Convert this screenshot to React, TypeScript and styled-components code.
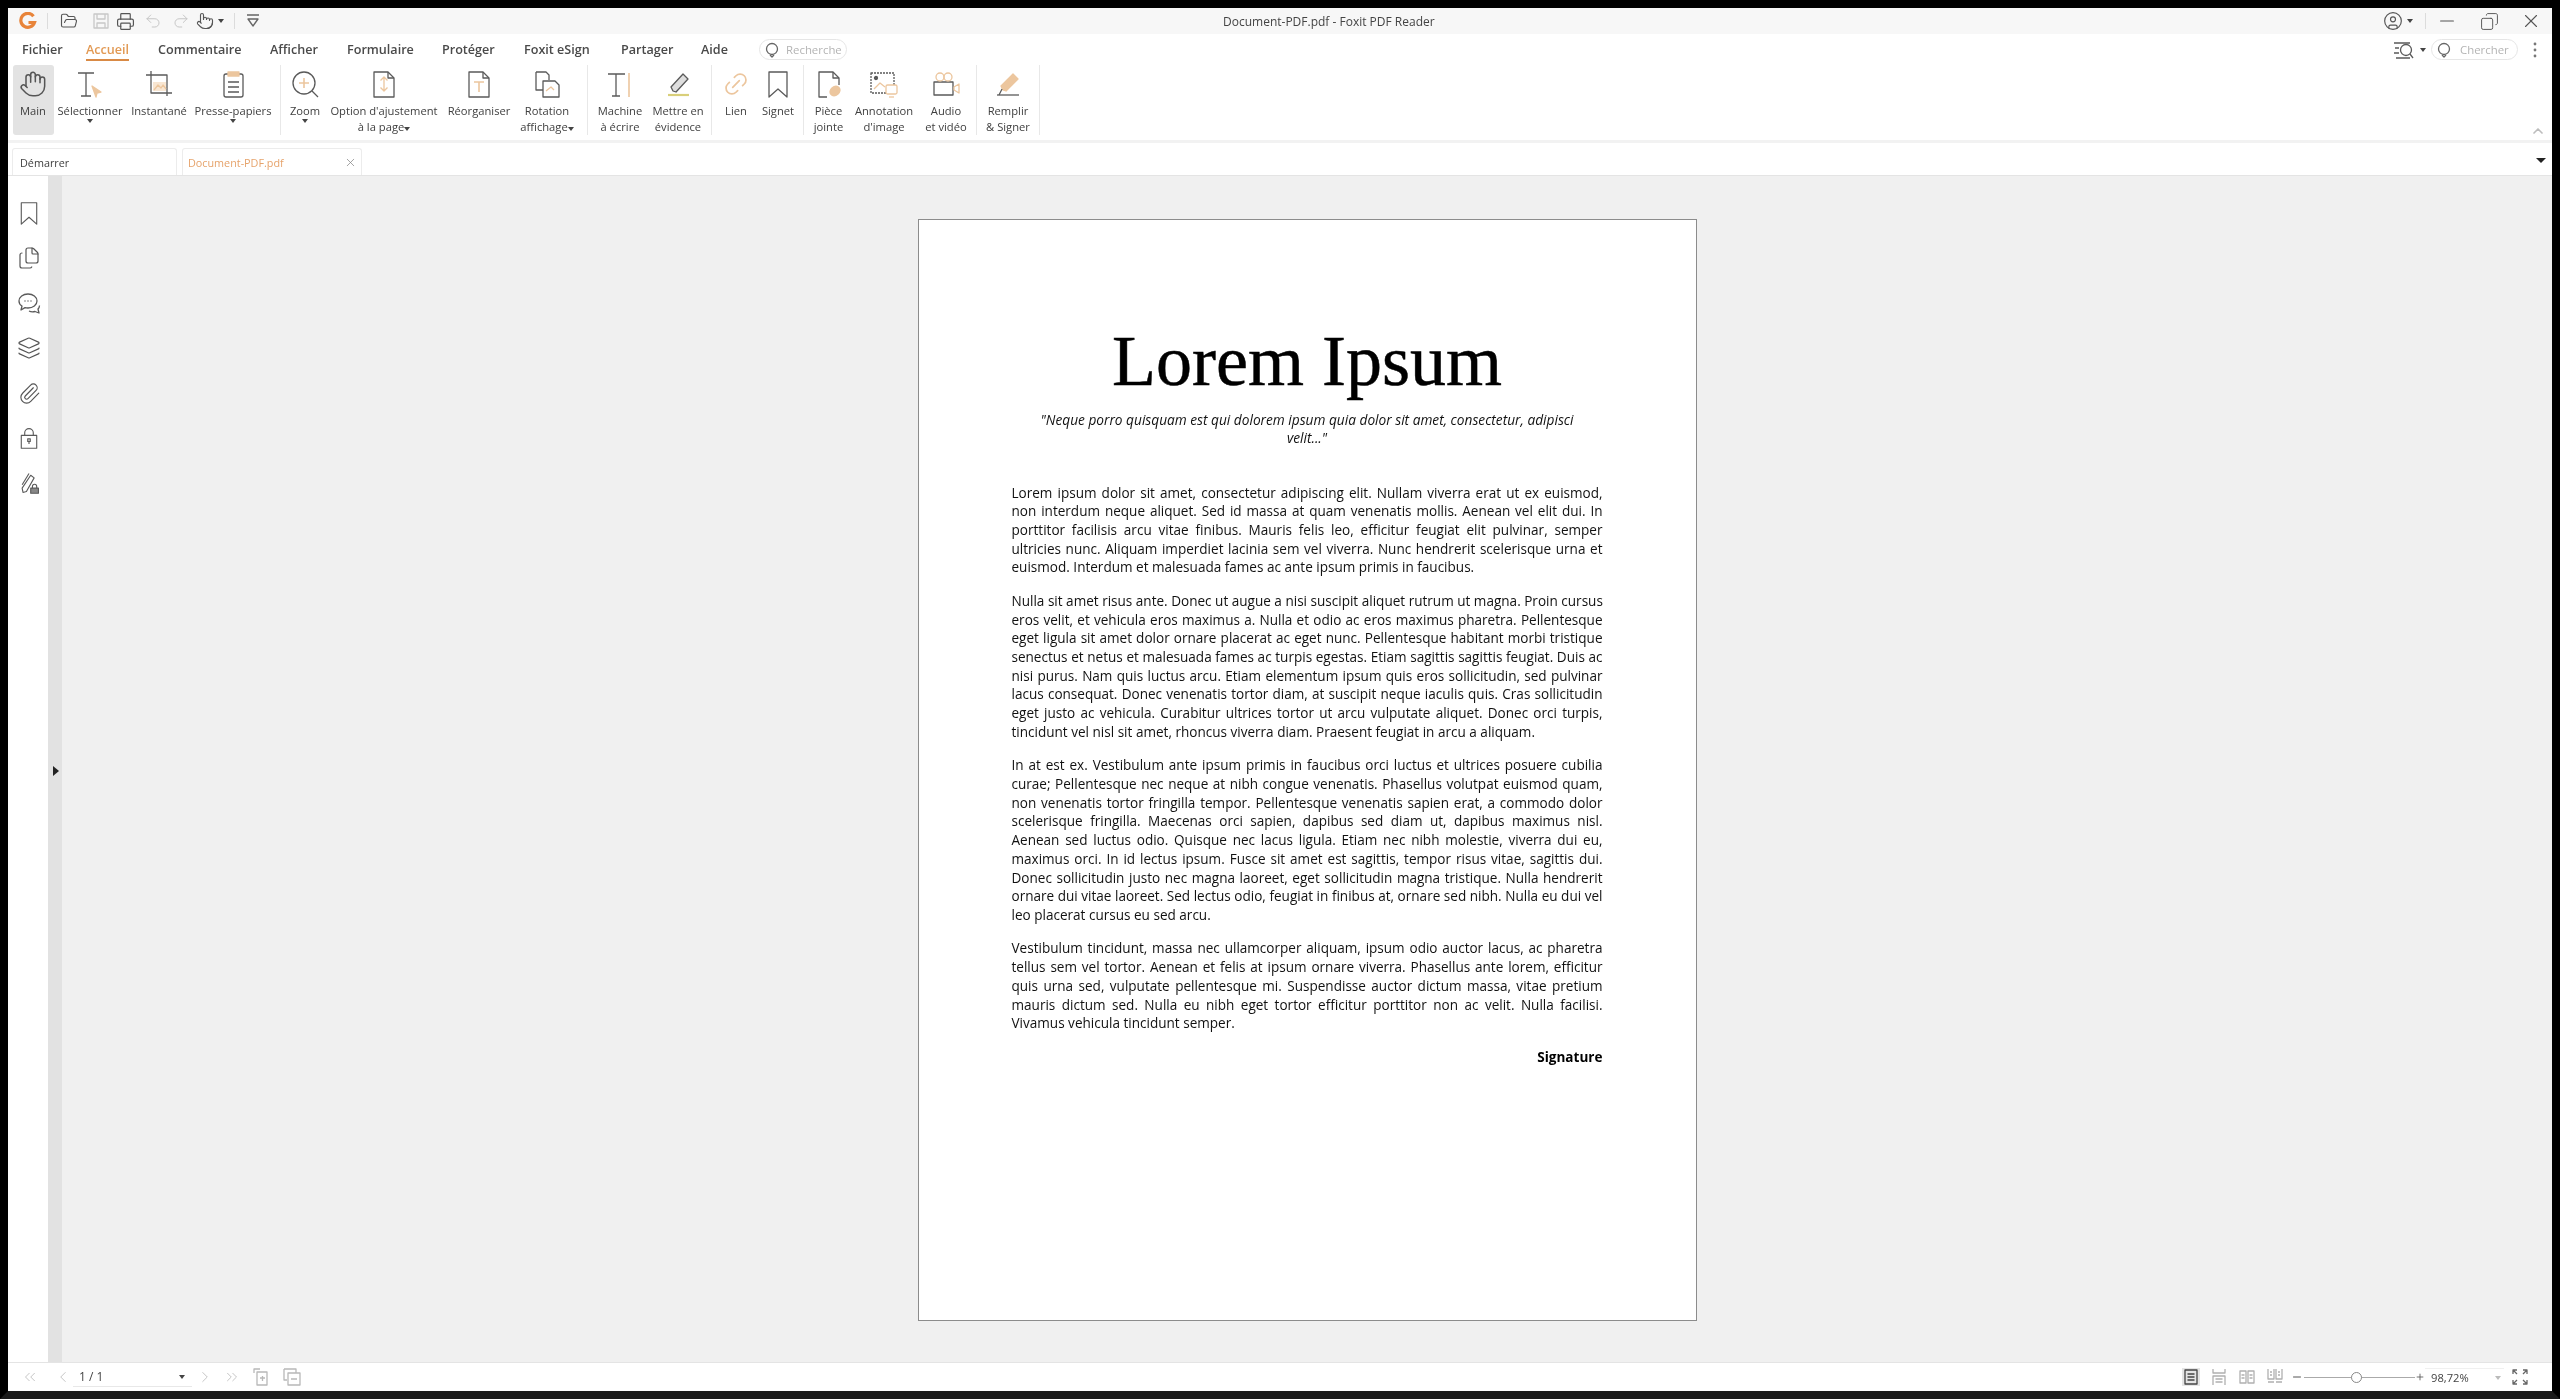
import React, { FC, ReactNode } from "react";
import styled, { createGlobalStyle } from "styled-components";
import {
  Hand,
  FolderOpen,
  Printer,
  Undo2,
  Redo2,
  Pointer,
  CircleUser,
  Copy,
  X,
  Minus,
  Plus,
  Layers,
  Paperclip,
  Files,
  Link2,
  ChevronUp,
  ChevronLeft,
  ChevronRight,
  ChevronsLeft,
  ChevronsRight,
} from "lucide-react";

const GlobalStyle = createGlobalStyle`
  html, body {
    margin: 0;
    padding: 0;
    background: #000;
  }
  * {
    box-sizing: border-box;
  }
`;

const Frame = styled.div`
  width: 2560px;
  height: 1399px;
  border: 8px solid #000;
  border-bottom-color: #1b1b1b;
  display: flex;
  flex-direction: column;
  background: #fff;
  font-family: "Open Sans", "Noto Sans", sans-serif;
  color: #4a4a4a;
  overflow: hidden;
  filter: blur(0.55px);
`;

const TitleBar = styled.div`
  height: 26px;
  flex: none;
  background: #f7f7f7;
  display: flex;
  align-items: center;
`;

const QuickBar = styled.div`
  width: 1215px;
  display: flex;
  align-items: center;
`;

const Slot = styled.span<{ $w: number; $dim?: boolean }>`
  width: ${(p) => p.$w}px;
  flex: none;
  display: flex;
  align-items: center;
  justify-content: center;
  color: ${(p) => (p.$dim ? "#c4c4c4" : "#555")};
`;

const VSep = styled.span`
  width: 1px;
  height: 16px;
  flex: none;
  background: #dcdcdc;
`;

const WindowTitle = styled.div`
  font-size: 12px;
  color: #444;
`;

const WindowButtons = styled.div`
  margin-left: auto;
  display: flex;
  align-items: center;
`;

const Caret = styled.span<{ $c?: string; $s?: number }>`
  display: inline-block;
  width: 0;
  height: 0;
  border-left: ${(p) => p.$s ?? 3.5}px solid transparent;
  border-right: ${(p) => p.$s ?? 3.5}px solid transparent;
  border-top: ${(p) => (p.$s ?? 3.5) + 0.5}px solid ${(p) => p.$c ?? "#444"};
`;

const MenuBar = styled.div`
  height: 28px;
  flex: none;
  display: flex;
  align-items: center;
  padding-left: 14px;
  padding-top: 3px;
  position: relative;
`;

const MenuItem = styled.div<{ $active?: boolean; $w: number }>`
  width: ${(p) => p.$w}px;
  flex: none;
  font-size: 12.6px;
  font-weight: 600;
  line-height: 20px;
  white-space: nowrap;
  color: #4a4a4a;
  span {
    display: inline-block;
    ${(p) =>
      p.$active &&
      `color: #e29a55; border-bottom: 2px solid #d98a45; line-height: 18px; margin-top: 2px;`}
  }
`;

const SearchPill = styled.div<{ $w: number }>`
  width: ${(p) => p.$w}px;
  height: 21px;
  flex: none;
  border: 1px solid #e6e6e6;
  border-radius: 11px;
  display: flex;
  align-items: center;
  gap: 6px;
  padding-left: 4px;
  font-size: 11.4px;
  color: #b4b4b4;
  overflow: hidden;
  white-space: nowrap;
`;

const MenuRight = styled.div`
  margin-left: auto;
  display: flex;
  align-items: center;
`;

const Ribbon = styled.div`
  height: 78px;
  flex: none;
  display: flex;
  align-items: flex-start;
  padding-top: 3px;
  position: relative;
`;

const RibbonGroup = styled.div<{ $w: number; $pad?: number }>`
  width: ${(p) => p.$w}px;
  height: 70px;
  flex: none;
  display: flex;
  padding-left: ${(p) => p.$pad ?? 0}px;
  border-right: 1px solid #e8e8e8;
`;

const RibbonItem = styled.div<{ $w: number; $active?: boolean }>`
  width: ${(p) => p.$w}px;
  height: 70px;
  flex: none;
  display: flex;
  flex-direction: column;
  align-items: center;
  border-radius: 3px;
  background: ${(p) => (p.$active ? "#e3e3e3" : "transparent")};
  font-size: 11.2px;
  line-height: 16px;
  text-align: center;
  white-space: nowrap;
  color: #404040;
`;

const RibbonIcon = styled.div`
  height: 36px;
  margin-top: 1px;
  flex: none;
  display: flex;
  align-items: center;
  justify-content: center;
  color: #555;
`;

const RibbonLabel = styled.div`
  margin-top: 1px;
`;

const CollapseButton = styled.div`
  margin-left: auto;
  align-self: flex-end;
  padding: 0 6px 1px 0;
  color: #bdbdbd;
  display: flex;
`;

const TabRow = styled.div`
  height: 36px;
  flex: none;
  border-top: 3px solid #f2f2f2;
  border-bottom: 1px solid #e4e4e4;
  display: flex;
  align-items: flex-end;
  padding-left: 4px;
  gap: 5px;
`;

const Tab = styled.div<{ $w: number; $active?: boolean }>`
  width: ${(p) => p.$w}px;
  height: 27px;
  flex: none;
  border: 1px solid #ececec;
  border-bottom: none;
  border-radius: 3px 3px 0 0;
  display: flex;
  align-items: center;
  justify-content: space-between;
  padding: 0 4px 0 ${(p) => (p.$active ? 5 : 7)}px;
  font-size: 10.8px;
  color: ${(p) => (p.$active ? "#e6a36b" : "#404040")};
`;

const TabMenu = styled.div`
  margin: 0 6px 12px auto;
  display: flex;
`;

const Body = styled.div`
  flex: 1;
  min-height: 0;
  display: flex;
`;

const SideBar = styled.div`
  width: 40px;
  flex: none;
  display: flex;
  flex-direction: column;
  align-items: center;
  gap: 17px;
  padding: 23px 0 0 2px;
  color: #555;
`;

const SideIcon = styled.div`
  height: 28px;
  display: flex;
  align-items: center;
  justify-content: center;
`;

const Gutter = styled.div`
  width: 14px;
  flex: none;
  background: #e2e2e2;
  display: flex;
  align-items: center;
  justify-content: center;
  padding-top: 4px;
`;

const GutterArrow = styled.span`
  width: 0;
  height: 0;
  border-top: 5px solid transparent;
  border-bottom: 5px solid transparent;
  border-left: 6px solid #222;
  margin-left: 2px;
`;

const Canvas = styled.div`
  flex: 1;
  background: #f0f0f0;
  display: flex;
  justify-content: center;
  padding-top: 43px;
`;

const Page = styled.div`
  width: 779px;
  height: 1102px;
  flex: none;
  background: #fff;
  border: 1px solid #8c8c8c;
  padding: 101px 93px 0;
  color: #111;
`;

const DocTitle = styled.h1`
  margin: 0;
  font-family: "Liberation Serif", "DejaVu Serif", serif;
  font-size: 72px;
  font-weight: 400;
  line-height: 80px;
  text-align: center;
  color: #000;
  -webkit-text-stroke: 0.5px #000;
`;

const Quote = styled.p`
  margin: 10px 0 36.5px;
  font-size: 13.7px;
  line-height: 18px;
  font-style: italic;
  text-align: center;
  color: #111;
`;

const Paragraph = styled.div`
  margin-bottom: 14.7px;
`;

const TextLine = styled.div<{ $last?: boolean }>`
  font-size: 13.55px;
  line-height: 18.72px;
  white-space: nowrap;
  text-align: ${(p) => (p.$last ? "left" : "justify")};
  text-align-last: ${(p) => (p.$last ? "left" : "justify")};
  color: #111;
`;

const Signature = styled.div`
  font-size: 13.55px;
  line-height: 18.72px;
  font-weight: 700;
  text-align: right;
  color: #000;
`;

const StatusBar = styled.div`
  height: 29px;
  flex: none;
  border-top: 1px solid #e4e4e4;
  display: flex;
  align-items: center;
  color: #b5b5b5;
`;

const PageInput = styled.div`
  width: 119px;
  height: 19px;
  flex: none;
  border-bottom: 1px solid #e8e8e8;
  display: flex;
  align-items: center;
  justify-content: space-between;
  padding: 0 7px 0 6px;
  font-size: 12px;
  color: #444;
`;

const StatusRight = styled.div`
  margin-left: auto;
  padding-right: 16px;
  display: flex;
  align-items: center;
`;

const ViewGroup = styled.div`
  display: flex;
  gap: 10px;
  margin-right: 6px;
`;

const ViewButton = styled.div<{ $active?: boolean }>`
  width: 18px;
  height: 18px;
  display: flex;
  align-items: center;
  justify-content: center;
  background: ${(p) => (p.$active ? "#e4e4e4" : "transparent")};
  color: ${(p) => (p.$active ? "#444" : "#b0b0b0")};
`;

const ZoomTrack = styled.div`
  width: 111px;
  height: 1px;
  flex: none;
  background: #aaa;
  position: relative;
`;

const ZoomKnob = styled.span`
  position: absolute;
  left: 47px;
  top: -5px;
  width: 11px;
  height: 11px;
  border-radius: 50%;
  background: #fff;
  border: 1px solid #888;
`;

const ZoomValue = styled.div`
  width: 79px;
  height: 19px;
  flex: none;
  display: flex;
  align-items: center;
  justify-content: space-between;
  padding: 0 3px 0 6px;
  font-size: 11.2px;
  color: #444;
  border-top: 1px solid #f0f0f0;
`;

const Line = "#5a5a5a";
const Orange = "#ecc69e";

const Svg: FC<{ size?: number; box?: number; children: ReactNode; color?: string }> = ({
  size = 28,
  box = 28,
  children,
  color = Line,
}) => (
  <svg
    width={size}
    height={size}
    viewBox={`0 0 ${box} ${box}`}
    fill="none"
    stroke={color}
    strokeWidth={1.3}
    strokeLinejoin="round"
  >
    {children}
  </svg>
);

const LogoIcon = () => (
  <svg width={18} height={18} viewBox="0 0 18 18" fill="none">
    <path d="M14.5 4.2A7 7 0 1 0 15.5 10.5H9.5" stroke="#e8843a" strokeWidth={3.2} />
  </svg>
);

const SaveIcon = () => (
  <Svg size={18} box={18} color="#c8c8c8">
    <rect x={2} y={2} width={14} height={14} />
    <path d="M5 2v5h8V2M5 16v-5h8v5" />
  </Svg>
);

const SelectIcon = () => (
  <Svg>
    <path d="M2 3h16M10 3v23M5 26h10" />
    <path d="M16 16l9 6-4 1-1 4z" fill={Orange} stroke={Orange} />
  </Svg>
);

const SnapshotIcon = () => (
  <Svg>
    <path d="M6 1v22h21M1 5h21v21" />
    <path d="M8 21V12h13v9z" fill="#f8e6d2" stroke="none" />
    <path d="M9 20l4-5 3 3 2-3 3 4" stroke={Orange} />
  </Svg>
);

const ClipboardIcon = () => (
  <Svg>
    <rect x={5} y={4} width={19} height={23} rx={2} />
    <rect x={9} y={2} width={11} height={4} fill={Orange} stroke={Orange} />
    <path d="M9 12h11M9 17h11M9 22h11" />
  </Svg>
);

const ZoomIcon = () => (
  <Svg>
    <circle cx={13} cy={13} r={11} />
    <path d="M21 21l6 6" />
    <path d="M13 8v10M8 13h10" stroke={Orange} strokeWidth={1.6} />
  </Svg>
);

const FitIcon = () => (
  <Svg>
    <path d="M4 2h14l6 6v19H4z" />
    <path d="M18 2v6h6" />
    <path d="M14 7v14M10.5 10.5L14 7l3.500 3.500M10.500 17.500L14 21l3.500-3.500" stroke={Orange} />
  </Svg>
);

const ReorderIcon = () => (
  <Svg>
    <path d="M4 2h14l6 6v19H4z" />
    <path d="M18 2v6h6" />
    <path d="M9 12h10M14 12v10" stroke={Orange} strokeWidth={1.6} />
  </Svg>
);

const RotateIcon = () => (
  <Svg>
    <path d="M3 2h10l3 3v5M10 20H3V2" />
    <path d="M10 11h12l4 4v12H10z" />
    <path d="M13 21l5-4 3 3" stroke={Orange} />
  </Svg>
);

const TypewriterIcon = () => (
  <Svg>
    <path d="M2 4h17M10 4v22M6 26h8" />
    <path d="M23 3v24" stroke={Orange} strokeWidth={1.6} />
  </Svg>
);

const HighlightIcon = () => (
  <Svg>
    <path d="M9 21L7 17 19 4l5 5-12 13z" fill="#dedede" />
    <path d="M4 25h21" stroke="#d9cf7a" strokeWidth={2.2} />
  </Svg>
);

const BookmarkIcon: FC<{ size?: number }> = ({ size = 28 }) => (
  <Svg size={size}>
    <path d="M5 2h18v25l-9-8-9 8z" />
  </Svg>
);

const AttachIcon = () => (
  <Svg>
    <path d="M12 27H4V2h14l6 6v7" />
    <path d="M18 2v6h6" />
    <ellipse cx={20} cy={21} rx={6} ry={5} transform="rotate(-40 20 21)" fill={Orange} stroke="none" />
  </Svg>
);

const ImageNoteIcon = () => (
  <Svg>
    <rect x={1} y={3} width={23} height={20} strokeDasharray="2 1" />
    <circle cx={6} cy={8} r={1.5} fill={Line} />
    <path d="M4 19l6-6 5 4" stroke={Orange} />
    <rect x={16} y={15} width={11} height={9} rx={1.500} stroke={Orange} fill="#fff" />
    <path d="M19 27h5" stroke={Orange} />
  </Svg>
);

const VideoIcon = () => (
  <Svg>
    <rect x={2} y={12} width={19} height={13} />
    <circle cx={8} cy={7} r={4} stroke={Orange} />
    <circle cx={16} cy={7} r={4} stroke={Orange} />
    <path d="M22 17l5-3v9l-5-3z" stroke={Orange} />
  </Svg>
);

const SignIcon = () => (
  <Svg>
    <path d="M9 20L7 16 19 4l5 5-12 12z" fill={Orange} stroke={Orange} />
    <path d="M3 25h22" />
    <path d="M5 25l3-6" />
  </Svg>
);

const PagesIcon = () => <Files size={24} strokeWidth={1.2} />;

const CommentIcon = () => (
  <Svg size={24} box={24}>
    <path d="M11 3c5 0 9 3 9 7s-4 7-9 7c-1 0-2 0-3-.4L4 19l1-4c-2-1-3-3-3-5 0-4 4-7 9-7z" />
    <path d="M12 20c2 1 4 1 6 .5l4 1.500-1-4c1-1 1.500-2 1.500-3.500" />
    <path d="M7.500 10h1M10.500 10h1M13.500 10h1" strokeWidth={1.6} />
  </Svg>
);

const LockDocIcon = () => (
  <Svg size={24}>
    <rect x={5} y={11} width={18} height={15} />
    <path d="M9 11V8a5 5 0 0 1 10 0v3" />
    <rect x={12.500} y={15} width={3} height={3} />
    <path d="M14 18v3" />
  </Svg>
);

const PenLockIcon = () => (
  <Svg size={24}>
    <path d="M7 25l-1-5L16 5l4 3L11 24z" />
    <path d="M14 3l-8 13" />
    <rect x={16} y={20} width={9} height={6} fill="#888" />
    <path d="M18 20v-2a2.500 2.500 0 0 1 5 0v2" />
  </Svg>
);

const FindListIcon = () => (
  <Svg size={22} box={22}>
    <path d="M1 4h16M2 9h4M1 14h5M3 19h14" />
    <circle cx={13} cy={11} r={5.500} />
    <path d="M17 15l3 4" />
  </Svg>
);

const SearchBubble = () => (
  <Svg size={16} box={16} color="#666">
    <circle cx={8} cy={7} r={5.500} />
    <path d="M6 13l2 2 2-2" />
  </Svg>
);

const Dots = () => (
  <svg width={4} height={16} viewBox="0 0 4 16" fill="#777">
    <circle cx={2} cy={2} r={1.4} />
    <circle cx={2} cy={8} r={1.4} />
    <circle cx={2} cy={14} r={1.4} />
  </svg>
);

const DropLine = () => (
  <Svg size={16} box={16} color="#666">
    <path d="M2 2h12M3 6h10l-5 7z" />
  </Svg>
);

const ToolAdd = () => (
  <Svg size={18} box={18} color="#b8b8b8">
    <path d="M1 5V1h6M4 4h10v13H4zM7 10h5M9.500 8v5" />
  </Svg>
);

const ToolRemove = () => (
  <Svg size={18} box={18} color="#b8b8b8">
    <path d="M1 1h12v4M1 1v11h3M5 5h12v12H5zM8 11h6" />
  </Svg>
);

const SingleView = () => (
  <Svg size={16} box={16} color="currentColor">
    <rect x={2} y={1} width={12} height={14} />
    <path d="M4.500 5h7M4.500 8h7M4.500 11h7" />
  </Svg>
);

const ScrollView = () => (
  <Svg size={16} box={16} color="currentColor">
    <path d="M2 0v4h12V0M2 16v-9h12v9M4.500 10h7M4.500 13h7" />
  </Svg>
);

const DoubleView = () => (
  <Svg size={16} box={16} color="currentColor">
    <rect x={1} y={2} width={6} height={12} />
    <rect x={9} y={2} width={6} height={12} />
    <path d="M2.500 6h3M2.500 9h3M10.500 6h3M10.500 9h3" />
  </Svg>
);

const GridView = () => (
  <Svg size={16} box={16} color="currentColor">
    <path d="M1 0v10h6V0M9 0v10h6V0M1 13h6M9 13h6M3 3h2M3 6h2M11 3h2M11 6h2" />
  </Svg>
);

const FullScreen = () => (
  <Svg size={16} box={16} color="#666">
    <path d="M1 5V1h4M11 1h4v4M15 11v4h-4M5 15H1v-4M1 1l4 4M15 1l-4 4M15 15l-4-4M1 15l4-4" />
  </Svg>
);

const menus: [string, number, boolean?][] = [
  ["Fichier", 64],
  ["Accueil", 72, true],
  ["Commentaire", 112],
  ["Afficher", 77],
  ["Formulaire", 95],
  ["Protéger", 82],
  ["Foxit eSign", 97],
  ["Partager", 80],
  ["Aide", 58],
];

const documentText: string[][] = [
  [
    "Lorem ipsum dolor sit amet, consectetur adipiscing elit. Nullam viverra erat ut ex euismod,",
    "non interdum neque aliquet. Sed id massa at quam venenatis mollis. Aenean vel elit dui. In",
    "porttitor facilisis arcu vitae finibus. Mauris felis leo, efficitur feugiat elit pulvinar, semper",
    "ultricies nunc. Aliquam imperdiet lacinia sem vel viverra. Nunc hendrerit scelerisque urna et",
    "euismod. Interdum et malesuada fames ac ante ipsum primis in faucibus.",
  ],
  [
    "Nulla sit amet risus ante. Donec ut augue a nisi suscipit aliquet rutrum ut magna. Proin cursus",
    "eros velit, et vehicula eros maximus a. Nulla et odio ac eros maximus pharetra. Pellentesque",
    "eget ligula sit amet dolor ornare placerat ac eget nunc. Pellentesque habitant morbi tristique",
    "senectus et netus et malesuada fames ac turpis egestas. Etiam sagittis sagittis feugiat. Duis ac",
    "nisi purus. Nam quis luctus arcu. Etiam elementum ipsum quis eros sollicitudin, sed pulvinar",
    "lacus consequat. Donec venenatis tortor diam, at suscipit neque iaculis quis. Cras sollicitudin",
    "eget justo ac vehicula. Curabitur ultrices tortor ut arcu vulputate aliquet. Donec orci turpis,",
    "tincidunt vel nisl sit amet, rhoncus viverra diam. Praesent feugiat in arcu a aliquam.",
  ],
  [
    "In at est ex. Vestibulum ante ipsum primis in faucibus orci luctus et ultrices posuere cubilia",
    "curae; Pellentesque nec neque at nibh congue venenatis. Phasellus volutpat euismod quam,",
    "non venenatis tortor fringilla tempor. Pellentesque venenatis sapien erat, a commodo dolor",
    "scelerisque fringilla. Maecenas orci sapien, dapibus sed diam ut, dapibus maximus nisl.",
    "Aenean sed luctus odio. Quisque nec lacus ligula. Etiam nec nibh molestie, viverra dui eu,",
    "maximus orci. In id lectus ipsum. Fusce sit amet est sagittis, tempor risus vitae, sagittis dui.",
    "Donec sollicitudin justo nec magna laoreet, eget sollicitudin magna tristique. Nulla hendrerit",
    "ornare dui vitae laoreet. Sed lectus odio, feugiat in finibus at, ornare sed nibh. Nulla eu dui vel",
    "leo placerat cursus eu sed arcu.",
  ],
  [
    "Vestibulum tincidunt, massa nec ullamcorper aliquam, ipsum odio auctor lacus, ac pharetra",
    "tellus sem vel tortor. Aenean et felis at ipsum ornare viverra. Phasellus ante lorem, efficitur",
    "quis urna sed, vulputate pellentesque mi. Suspendisse auctor dictum massa, vitae pretium",
    "mauris dictum sed. Nulla eu nibh eget tortor efficitur porttitor non ac velit. Nulla facilisi.",
    "Vivamus vehicula tincidunt semper.",
  ],
];

const App: FC = () => (
  <>
    <GlobalStyle />
    <Frame>
      <TitleBar>
        <QuickBar>
          <Slot $w={39}>
            <LogoIcon />
          </Slot>
          <VSep />
          <Slot $w={41}>
            <FolderOpen size={18} strokeWidth={1.5} />
          </Slot>
          <Slot $w={24}>
            <SaveIcon />
          </Slot>
          <Slot $w={25}>
            <Printer size={19} strokeWidth={1.5} />
          </Slot>
          <Slot $w={29} $dim>
            <Undo2 size={18} strokeWidth={1.3} />
          </Slot>
          <Slot $w={27} $dim>
            <Redo2 size={18} strokeWidth={1.3} />
          </Slot>
          <Slot $w={22}>
            <Pointer size={18} strokeWidth={1.5} />
          </Slot>
          <Slot $w={10}>
            <Caret />
          </Slot>
          <Slot $w={8} />
          <VSep />
          <Slot $w={36}>
            <DropLine />
          </Slot>
        </QuickBar>
        <WindowTitle>Document-PDF.pdf - Foxit PDF Reader</WindowTitle>
        <WindowButtons>
          <Slot $w={24}>
            <CircleUser size={20} strokeWidth={1.4} />
          </Slot>
          <Slot $w={10}>
            <Caret />
          </Slot>
          <Slot $w={10} />
          <VSep />
          <Slot $w={42}>
            <Minus size={22} strokeWidth={1.2} />
          </Slot>
          <Slot $w={42}>
            <Copy size={19} strokeWidth={1.2} style={{ transform: "scaleX(-1)" }} />
          </Slot>
          <Slot $w={42}>
            <X size={22} strokeWidth={1.2} />
          </Slot>
        </WindowButtons>
      </TitleBar>

      <MenuBar>
        {menus.map(([name, w, active]) => (
          <MenuItem key={name} $w={w} $active={active}>
            <span>{name}</span>
          </MenuItem>
        ))}
        <SearchPill $w={88}>
          <SearchBubble />
          Recherche
        </SearchPill>
        <MenuRight>
          <Slot $w={26}>
            <FindListIcon />
          </Slot>
          <Slot $w={12}>
            <Caret />
          </Slot>
          <Slot $w={2} />
          <SearchPill $w={87}>
            <SearchBubble />
            <span style={{ marginLeft: 2 }}>Chercher</span>
          </SearchPill>
          <Slot $w={34}>
            <Dots />
          </Slot>
        </MenuRight>
      </MenuBar>

      <Ribbon>
        <RibbonGroup $w={273} $pad={4.5}>
          <RibbonItem $w={41} $active>
            <RibbonIcon>
              <Hand size={28} strokeWidth={1.3} />
            </RibbonIcon>
            <RibbonLabel>Main</RibbonLabel>
          </RibbonItem>
          <RibbonItem $w={73}>
            <RibbonIcon>
              <SelectIcon />
            </RibbonIcon>
            <RibbonLabel>Sélectionner</RibbonLabel>
            <Caret />
          </RibbonItem>
          <RibbonItem $w={65}>
            <RibbonIcon>
              <SnapshotIcon />
            </RibbonIcon>
            <RibbonLabel>Instantané</RibbonLabel>
          </RibbonItem>
          <RibbonItem $w={83}>
            <RibbonIcon>
              <ClipboardIcon />
            </RibbonIcon>
            <RibbonLabel>Presse-papiers</RibbonLabel>
            <Caret />
          </RibbonItem>
        </RibbonGroup>

        <RibbonGroup $w={307}>
          <RibbonItem $w={48}>
            <RibbonIcon>
              <ZoomIcon />
            </RibbonIcon>
            <RibbonLabel>Zoom</RibbonLabel>
            <Caret />
          </RibbonItem>
          <RibbonItem $w={110}>
            <RibbonIcon>
              <FitIcon />
            </RibbonIcon>
            <RibbonLabel>
              Option d'ajustement
              <br />à la page
              <Caret />
            </RibbonLabel>
          </RibbonItem>
          <RibbonItem $w={80}>
            <RibbonIcon>
              <ReorderIcon />
            </RibbonIcon>
            <RibbonLabel>Réorganiser</RibbonLabel>
          </RibbonItem>
          <RibbonItem $w={56}>
            <RibbonIcon>
              <RotateIcon />
            </RibbonIcon>
            <RibbonLabel>
              Rotation
              <br />
              affichage
              <Caret />
            </RibbonLabel>
          </RibbonItem>
        </RibbonGroup>

        <RibbonGroup $w={124}>
          <RibbonItem $w={64}>
            <RibbonIcon>
              <TypewriterIcon />
            </RibbonIcon>
            <RibbonLabel>
              Machine
              <br />à écrire
            </RibbonLabel>
          </RibbonItem>
          <RibbonItem $w={52}>
            <RibbonIcon>
              <HighlightIcon />
            </RibbonIcon>
            <RibbonLabel>
              Mettre en
              <br />
              évidence
            </RibbonLabel>
          </RibbonItem>
        </RibbonGroup>

        <RibbonGroup $w={92}>
          <RibbonItem $w={48}>
            <RibbonIcon>
              <Link2 size={28} strokeWidth={1.5} color={Orange} style={{ transform: "rotate(-45deg)" }} />
            </RibbonIcon>
            <RibbonLabel>Lien</RibbonLabel>
          </RibbonItem>
          <RibbonItem $w={36}>
            <RibbonIcon>
              <BookmarkIcon />
            </RibbonIcon>
            <RibbonLabel>Signet</RibbonLabel>
          </RibbonItem>
        </RibbonGroup>

        <RibbonGroup $w={173}>
          <RibbonItem $w={49}>
            <RibbonIcon>
              <AttachIcon />
            </RibbonIcon>
            <RibbonLabel>
              Pièce
              <br />
              jointe
            </RibbonLabel>
          </RibbonItem>
          <RibbonItem $w={62}>
            <RibbonIcon>
              <ImageNoteIcon />
            </RibbonIcon>
            <RibbonLabel>
              Annotation
              <br />
              d'image
            </RibbonLabel>
          </RibbonItem>
          <RibbonItem $w={62}>
            <RibbonIcon>
              <VideoIcon />
            </RibbonIcon>
            <RibbonLabel>
              Audio
              <br />
              et vidéo
            </RibbonLabel>
          </RibbonItem>
        </RibbonGroup>

        <RibbonGroup $w={63}>
          <RibbonItem $w={62}>
            <RibbonIcon>
              <SignIcon />
            </RibbonIcon>
            <RibbonLabel>
              Remplir
              <br />& Signer
            </RibbonLabel>
          </RibbonItem>
        </RibbonGroup>

        <CollapseButton>
          <ChevronUp size={16} strokeWidth={2.5} />
        </CollapseButton>
      </Ribbon>

      <TabRow>
        <Tab $w={165}>Démarrer</Tab>
        <Tab $w={180} $active>
          Document-PDF.pdf
          <X size={13} strokeWidth={1.4} color="#888" />
        </Tab>
        <TabMenu>
          <Caret $c="#222" $s={5} />
        </TabMenu>
      </TabRow>

      <Body>
        <SideBar>
          <SideIcon>
            <BookmarkIcon size={24} />
          </SideIcon>
          <SideIcon>
            <PagesIcon />
          </SideIcon>
          <SideIcon>
            <CommentIcon />
          </SideIcon>
          <SideIcon>
            <Layers size={24} strokeWidth={1.2} />
          </SideIcon>
          <SideIcon>
            <Paperclip size={23} strokeWidth={1.2} />
          </SideIcon>
          <SideIcon>
            <LockDocIcon />
          </SideIcon>
          <SideIcon>
            <PenLockIcon />
          </SideIcon>
        </SideBar>
        <Gutter>
          <GutterArrow />
        </Gutter>
        <Canvas>
          <Page>
            <DocTitle>Lorem Ipsum</DocTitle>
            <Quote>
              "Neque porro quisquam est qui dolorem ipsum quia dolor sit amet, consectetur, adipisci
              <br />
              velit..."
            </Quote>
            {documentText.map((lines) => (
              <Paragraph key={lines[0]}>
                {lines.map((line, i) => (
                  <TextLine key={line} $last={i === lines.length - 1}>
                    {line}
                  </TextLine>
                ))}
              </Paragraph>
            ))}
            <Signature>Signature</Signature>
          </Page>
        </Canvas>
      </Body>

      <StatusBar>
        <Slot $w={44} $dim>
          <ChevronsLeft size={18} strokeWidth={1.3} />
        </Slot>
        <Slot $w={21} $dim>
          <ChevronLeft size={18} strokeWidth={1.3} />
        </Slot>
        <PageInput>
          1 / 1
          <Caret />
        </PageInput>
        <Slot $w={25} $dim>
          <ChevronRight size={18} strokeWidth={1.3} />
        </Slot>
        <Slot $w={30} $dim>
          <ChevronsRight size={18} strokeWidth={1.3} />
        </Slot>
        <Slot $w={30}>
          <ToolAdd />
        </Slot>
        <Slot $w={30}>
          <ToolRemove />
        </Slot>
        <StatusRight>
          <ViewGroup>
            <ViewButton $active>
              <SingleView />
            </ViewButton>
            <ViewButton>
              <ScrollView />
            </ViewButton>
            <ViewButton>
              <DoubleView />
            </ViewButton>
            <ViewButton>
              <GridView />
            </ViewButton>
          </ViewGroup>
          <Slot $w={14}>
            <Minus size={12} strokeWidth={2} />
          </Slot>
          <ZoomTrack>
            <ZoomKnob />
          </ZoomTrack>
          <Slot $w={10}>
            <Plus size={12} strokeWidth={2} />
          </Slot>
          <ZoomValue>
            98,72%
            <Caret $c="#bbb" />
          </ZoomValue>
          <Slot $w={32}>
            <FullScreen />
          </Slot>
        </StatusRight>
      </StatusBar>
    </Frame>
  </>
);

export default App;
